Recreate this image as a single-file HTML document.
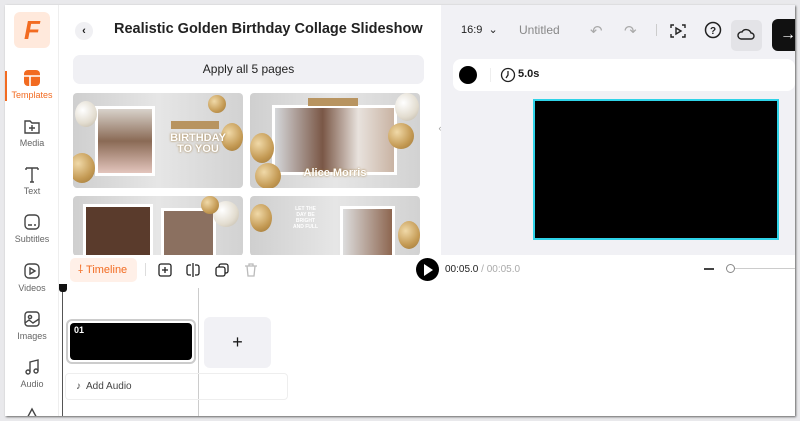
<!DOCTYPE html>
<html><head><meta charset="utf-8"><style>
*{box-sizing:border-box;margin:0;padding:0}
body{width:800px;height:421px;background:#e9e9ec;font-family:"Liberation Sans",sans-serif;position:relative;overflow:hidden;color:#1a1a1a}
.a{position:absolute}
.frame{left:5px;top:5px;width:790px;height:411px;background:#fff;overflow:hidden;box-shadow:1px 1px 2px #666}
.side{left:0;top:0;width:54px;height:411px;background:#fff;border-right:1px solid #eee}
.si{position:absolute;left:0;width:54px;text-align:center;font-size:9px;color:#666}
.si svg{display:block;margin:0 auto 3px}
.thumb{position:absolute;border-radius:4px;overflow:hidden;background:linear-gradient(90deg,#cfcfcf,#e6e6e6 50%,#d2d2d2)}
.bal{position:absolute;border-radius:50%}
.g{background:radial-gradient(circle at 35% 35%,#f0d9a8,#c49a54 60%,#9c7536)}
.w{background:radial-gradient(circle at 35% 35%,#fff,#e2dccf 60%,#bcb3a3)}
.ph{position:absolute;background:#fff;padding:3px}
</style></head><body>
<div class="a frame">
 <div class="a side">
  <div class="a" style="left:9px;top:7px;width:36px;height:36px;background:#ffe9dc;border-radius:6px;color:#f26b21;font-weight:bold;font-size:26px;text-align:center;line-height:36px;font-style:italic">F</div>
  <div class="a" style="left:0;top:66px;width:2px;height:30px;background:#f26b21"></div>
  <div class="si" style="top:64px;color:#f26b21"><svg width="18" height="18"><rect x="1" y="1" width="16" height="16" rx="4" fill="#f26b21"/><path d="M1 7h16M7 7v10" stroke="#fff" stroke-width="1.6"/></svg>Templates</div>
  <div class="si" style="top:112px"><svg width="18" height="18" fill="none" stroke="#444" stroke-width="1.4"><path d="M2 4h5l2 2h7v10H2z"/><path d="M9 8v6M6 11h6"/></svg>Media</div>
  <div class="si" style="top:160px"><svg width="18" height="18" fill="none" stroke="#444" stroke-width="1.4"><path d="M3 3h12M9 3v14M3 3v2M15 3v2M7 17h4"/></svg>Text</div>
  <div class="si" style="top:208px"><svg width="18" height="18" fill="none" stroke="#444" stroke-width="1.4"><rect x="2" y="2" width="14" height="14" rx="4"/><path d="M5 12h4M11 12h2"/></svg>Subtitles</div>
  <div class="si" style="top:257px"><svg width="18" height="18" fill="none" stroke="#444" stroke-width="1.4"><rect x="2" y="2" width="14" height="14" rx="4"/><path d="M7 6l5 3-5 3z"/></svg>Videos</div>
  <div class="si" style="top:305px"><svg width="18" height="18" fill="none" stroke="#444" stroke-width="1.4"><rect x="2" y="2" width="14" height="14" rx="3"/><circle cx="7" cy="7" r="1.6"/><path d="M2 13l4-3 4 3 6-4"/></svg>Images</div>
  <div class="si" style="top:353px"><svg width="18" height="18" fill="none" stroke="#444" stroke-width="1.4"><circle cx="5" cy="14" r="2"/><circle cx="13" cy="13" r="2"/><path d="M7 14V4l8-2v11"/></svg>Audio</div>
  <div class="si" style="top:401px"><svg width="18" height="18" fill="none" stroke="#444" stroke-width="1.4"><path d="M2 16L9 3l7 13"/></svg></div>
 </div>
 <!-- left panel -->
 <div class="a" style="left:70px;top:17px;width:18px;height:18px;border-radius:50%;background:#f0f0f3;font-size:11px;text-align:center;line-height:18px;font-weight:bold">‹</div>
 <div class="a" style="left:109px;top:16px;font-size:14.5px;font-weight:bold;color:#222">Realistic Golden Birthday Collage Slideshow</div>
 <div class="a" style="left:68px;top:50px;width:351px;height:29px;background:#f0f0f4;border-radius:7px;text-align:center;line-height:29px;font-size:12px;color:#222">Apply all 5 pages</div>
 <div class="thumb" style="left:68px;top:88px;width:170px;height:95px">
  <div class="ph" style="left:22px;top:13px;width:60px;height:70px"><div style="width:100%;height:100%;background:linear-gradient(#d8d2cb,#8a6a55 50%,#e3c5bd)"></div></div>
  <div class="bal w" style="left:2px;top:8px;width:22px;height:26px"></div><div class="bal g" style="left:-4px;top:60px;width:26px;height:30px"></div>
  <div class="bal g" style="left:148px;top:30px;width:22px;height:28px"></div><div class="bal g" style="left:135px;top:2px;width:18px;height:18px"></div>
  <div class="a" style="left:95px;top:40px;width:60px;text-align:center;color:#fff;font-weight:bold;font-size:11px;line-height:11px;text-shadow:0 0 2px #9c7536">BIRTHDAY<br>TO YOU</div>
  <div class="a" style="left:98px;top:28px;width:48px;height:8px;background:#b89460"></div>
 </div>
 <div class="thumb" style="left:245px;top:88px;width:170px;height:95px">
  <div class="ph" style="left:22px;top:12px;width:125px;height:70px"><div style="width:100%;height:100%;background:linear-gradient(90deg,#d5d7da,#7a5746 40%,#e8e2dd 70%,#c9b3a3)"></div></div>
  <div class="bal g" style="left:0;top:40px;width:24px;height:30px"></div><div class="bal g" style="left:5px;top:70px;width:26px;height:26px"></div>
  <div class="bal w" style="left:145px;top:0px;width:24px;height:28px"></div><div class="bal g" style="left:138px;top:30px;width:26px;height:26px"></div>
  <div class="a" style="left:0;top:74px;width:170px;text-align:center;color:#fff;font-weight:bold;font-size:11px;text-shadow:0 0 2px #9c7536">Alice Morris</div>
  <div class="a" style="left:58px;top:5px;width:50px;height:8px;background:#b89460"></div>
 </div>
 <div class="thumb" style="left:68px;top:191px;width:170px;height:60px">
  <div class="ph" style="left:10px;top:8px;width:70px;height:60px"><div style="width:100%;height:100%;background:#5a3b2c"></div></div>
  <div class="ph" style="left:88px;top:12px;width:55px;height:50px"><div style="width:100%;height:100%;background:#8b7060"></div></div>
  <div class="bal w" style="left:140px;top:5px;width:26px;height:26px"></div><div class="bal g" style="left:128px;top:0;width:18px;height:18px"></div>
 </div>
 <div class="thumb" style="left:245px;top:191px;width:170px;height:60px">
  <div class="ph" style="left:90px;top:10px;width:55px;height:55px"><div style="width:100%;height:100%;background:linear-gradient(90deg,#ddd,#8d6650)"></div></div>
  <div class="bal g" style="left:0;top:8px;width:22px;height:28px"></div><div class="bal g" style="left:148px;top:25px;width:22px;height:28px"></div>
  <div class="a" style="left:28px;top:10px;width:55px;height:40px;color:#fff;font-size:5px;line-height:6px;text-align:center;font-weight:bold">LET THE<br>DAY BE<br>BRIGHT<br>AND FULL</div>
 </div>
 <div class="a" style="left:429px;top:108px;width:12px;height:30px;background:#fff;border-radius:0 6px 6px 0;font-size:9px;color:#999;line-height:30px;text-align:center">‹</div>
 <!-- right -->
 <div class="a" style="left:436px;top:0;width:354px;height:250px;background:#f1f1f5"></div>
 <div class="a" style="left:456px;top:18px;font-size:11px;color:#222">16:9 &nbsp;⌄</div>
 <div class="a" style="left:514px;top:18px;font-size:12px;color:#888">Untitled</div>
 <div class="a" style="left:585px;top:17px;font-size:15px;color:#aaa">↶</div>
 <div class="a" style="left:619px;top:17px;font-size:15px;color:#aaa">↷</div>
 <div class="a" style="left:651px;top:19px;width:1px;height:12px;background:#ccc"></div>
 <svg class="a" style="left:664px;top:17px" width="18" height="18" fill="none" stroke="#222" stroke-width="1.4"><path d="M2 6V3h3M13 3h3v3M16 12v3h-3M5 15H2v-3"/><path d="M7 6l5 3-5 3z"/></svg>
 <svg class="a" style="left:699px;top:16px" width="18" height="18" fill="none" stroke="#222" stroke-width="1.5"><circle cx="9" cy="9" r="7.5"/><text x="9" y="13" font-size="10" text-anchor="middle" fill="#222" stroke="none" font-family="Liberation Sans" font-weight="bold">?</text></svg>
 <div class="a" style="left:726px;top:15px;width:31px;height:31px;background:#e3e3e7;border-radius:5px"></div>
 <svg class="a" style="left:732px;top:21px" width="18" height="18" fill="none" stroke="#222" stroke-width="1.4"><path d="M4 13h10a3 3 0 0 0 0-6 5 5 0 0 0-9-1 3.5 3.5 0 0 0-1 7z"/></svg>
 <div class="a" style="left:767px;top:14px;width:30px;height:32px;background:#111;border-radius:6px;color:#fff;font-size:16px;line-height:32px;padding-left:8px">→</div>
 <div class="a" style="left:448px;top:54px;width:342px;height:32px;background:#fff;border-radius:8px"></div>
 <div class="a" style="left:454px;top:61px;width:18px;height:18px;border-radius:50%;background:#000"></div>
 <div class="a" style="left:485px;top:63px;width:1px;height:14px;background:#eee"></div>
 <svg class="a" style="left:495px;top:62px" width="16" height="16" fill="none" stroke="#222" stroke-width="1.3"><circle cx="8" cy="8" r="6.5"/><path d="M8 4v4l-2 3"/></svg>
 <div class="a" style="left:513px;top:63px;font-size:11px;font-weight:bold">5.0s</div>
 <div class="a" style="left:528px;top:94px;width:246px;height:141px;background:#000;border:2px solid #2fd3e8"></div>
 <!-- timeline -->
 <div class="a" style="left:55px;top:250px;width:735px;height:161px;background:#fff"></div>
 <div class="a" style="left:65px;top:253px;width:67px;height:24px;background:#fff0e8;border-radius:5px;color:#f26b21;font-size:11px;line-height:24px;padding-left:8px">⸸ Timeline</div>
 <div class="a" style="left:140px;top:258px;width:1px;height:13px;background:#ddd"></div>
 <svg class="a" style="left:152px;top:257px" width="16" height="16" fill="none" stroke="#222" stroke-width="1.3"><rect x="2" y="2" width="12" height="12" rx="2"/><path d="M8 5v6M5 8h6"/></svg>
 <svg class="a" style="left:180px;top:257px" width="16" height="16" fill="none" stroke="#222" stroke-width="1.3"><path d="M6 3H4a2 2 0 0 0-2 2v6a2 2 0 0 0 2 2h2M10 3h2a2 2 0 0 1 2 2v6a2 2 0 0 1-2 2h-2M8 1v14"/></svg>
 <svg class="a" style="left:209px;top:257px" width="16" height="16" fill="none" stroke="#222" stroke-width="1.3"><rect x="2" y="5" width="9" height="9" rx="2"/><path d="M5 5V4a2 2 0 0 1 2-2h5a2 2 0 0 1 2 2v5a2 2 0 0 1-2 2h-1"/></svg>
 <svg class="a" style="left:238px;top:257px" width="16" height="16" fill="none" stroke="#bbb" stroke-width="1.3"><path d="M2 4h12M6 4V2h4v2M4 4l1 10h6l1-10"/></svg>
 <div class="a" style="left:411px;top:253px;width:23px;height:23px;border-radius:50%;background:#000"></div>
 <div class="a" style="left:419px;top:259px;width:0;height:0;border-left:9px solid #fff;border-top:6px solid transparent;border-bottom:6px solid transparent"></div>
 <div class="a" style="left:440px;top:259px;font-size:10px;color:#222">00:05.0 <span style="color:#aaa">/ 00:05.0</span></div>
 <div class="a" style="left:699px;top:263px;width:10px;height:1.5px;background:#444"></div>
 <div class="a" style="left:721px;top:263px;width:70px;height:1px;background:#ccc"></div>
 <div class="a" style="left:721px;top:259px;width:9px;height:9px;border-radius:50%;border:1px solid #888;background:#fff"></div>
 <div class="a" style="left:57px;top:283px;width:1px;height:128px;background:#555"></div>
 <div class="a" style="left:54px;top:279px;width:8px;height:8px;background:#111;border-radius:0 0 3px 3px"></div>
 <div class="a" style="left:193px;top:283px;width:1px;height:128px;background:#ccc"></div>
 <div class="a" style="left:61px;top:314px;width:130px;height:45px;border:2px solid #ccc;border-radius:6px;background:#fff;padding:2px"><div style="width:100%;height:100%;background:#000;border-radius:4px;color:#fff;font-size:9px;font-weight:bold;padding:2px 4px">01</div></div>
 <div class="a" style="left:199px;top:312px;width:67px;height:51px;background:#f1f1f5;border-radius:6px;text-align:center;line-height:51px;font-size:18px">+</div>
 <div class="a" style="left:60px;top:368px;width:223px;height:27px;border:1px solid #eee;border-radius:4px;font-size:10px;color:#444;line-height:25px;padding-left:10px">♪&nbsp; Add Audio</div>
</div>
</body></html>
